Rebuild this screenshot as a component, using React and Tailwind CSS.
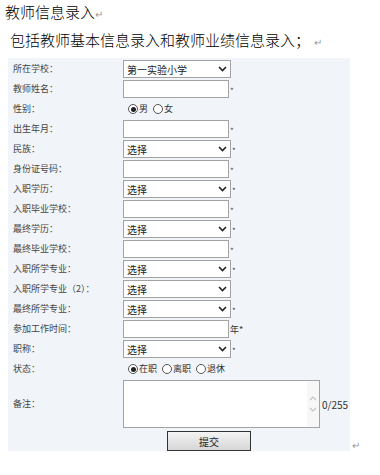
import React from 'react';

const FONT = { fontFamily: '"Noto Sans CJK SC", "Noto Sans", sans-serif' };

function Chevron() {
  return (
    <svg width="9" height="6" viewBox="0 0 9 6" className="shrink-0">
      <polyline points="1,1 4.5,4.5 8,1" fill="none" stroke="#222" strokeWidth="1.6" />
    </svg>
  );
}

function Star() {
  return <span className="ml-[1px] mt-[3px] text-[8px] leading-none text-[#444]">*</span>;
}

function Select({ value = '选择', star = true }) {
  return (
    <div className="flex items-center">
      <div className="flex h-[18px] w-[108px] items-center justify-between border border-[#a3a3a3] bg-white pl-[3px] pr-[3px] text-[10px] text-[#222]">
        <span>{value}</span>
        <Chevron />
      </div>
      {star && <Star />}
    </div>
  );
}

function Input({ suffix = '*' }) {
  return (
    <div className="flex items-center">
      <div className="h-[18px] w-[106px] border border-[#a3a3a3] bg-white" />
      {suffix === '*' ? <Star /> : <span className="ml-[1px] text-[9px] leading-none text-[#333]">{suffix}</span>}
    </div>
  );
}

function Radio({ checked, label }) {
  return (
    <span className="mr-[5px] flex items-center">
      <span className="flex h-[10px] w-[10px] items-center justify-center rounded-full border border-[#555] bg-white">
        {checked && <span className="h-[5px] w-[5px] rounded-full bg-[#222]" />}
      </span>
      <span className="ml-[1px] text-[9px] text-[#333]">{label}</span>
    </span>
  );
}

function Row({ label, children }) {
  return (
    <div className="flex h-5 items-center">
      <div className="w-[115px] pl-[5px] text-[9px] text-[#444]">{label}</div>
      {children}
    </div>
  );
}

export default function App() {
  return (
    <div className="h-[475px] w-[380px] bg-white" style={FONT}>
      <div className="h-[23px] pl-[5px] text-[15px] font-light leading-[23px] text-black">
        教师信息录入<span className="text-[10px] text-[#999]">↵</span>
      </div>
      <div className="mt-[5px] h-[23px] pl-[10px] text-[15px] font-light leading-[23px] text-black">
        包括教师基本信息录入和教师业绩信息录入；<span className="ml-[4px] text-[10px] text-[#999]">↵</span>
      </div>
      <div className="mt-[7px] flex items-end">
        <div className="ml-[8px] w-[342px] bg-[#f1f4f8] pt-[1px]">
          <Row label="所在学校："><Select value="第一实验小学" star={false} /></Row>
          <Row label="教师姓名："><Input /></Row>
          <Row label="性别：">
            <div className="ml-[5px] flex items-center">
              <Radio checked label="男" />
              <Radio label="女" />
            </div>
          </Row>
          <Row label="出生年月："><Input /></Row>
          <Row label="民族："><Select /></Row>
          <Row label="身份证号码："><Input /></Row>
          <Row label="入职学历："><Select /></Row>
          <Row label="入职毕业学校："><Input /></Row>
          <Row label="最终学历："><Select /></Row>
          <Row label="最终毕业学校："><Input /></Row>
          <Row label="入职所学专业："><Select /></Row>
          <Row label="入职所学专业（2）："><Select star={false} /></Row>
          <Row label="最终所学专业："><Select /></Row>
          <Row label="参加工作时间："><Input suffix="年*" /></Row>
          <Row label="职称："><Select /></Row>
          <Row label="状态：">
            <div className="ml-[5px] flex items-center">
              <Radio checked label="在职" />
              <Radio label="离职" />
              <Radio label="退休" />
            </div>
          </Row>
          <div className="flex h-[50px] items-center">
            <div className="w-[115px] pl-[5px] text-[9px] text-[#444]">备注：</div>
            <div className="flex h-[48px] w-[197px] justify-end border border-[#a3a3a3] bg-white">
              <div className="flex w-[12px] flex-col items-center justify-center gap-[6px] bg-[#f7f7f7]">
                <svg width="8" height="5" viewBox="0 0 8 5">
                  <polyline points="1,4 4,1 7,4" fill="none" stroke="#c4c4c4" strokeWidth="1.2" />
                </svg>
                <svg width="8" height="5" viewBox="0 0 8 5">
                  <polyline points="1,1 4,4 7,1" fill="none" stroke="#c4c4c4" strokeWidth="1.2" />
                </svg>
              </div>
            </div>
            <span className="ml-[2px] text-[10px] text-[#333]">0/255</span>
          </div>
          <div className="flex h-[22px] items-start pt-[2px]">
            <button className="ml-[159px] flex h-[20px] w-[84px] items-center justify-center border border-[#333] bg-gradient-to-b from-[#f4f4f4] to-[#d6d6d6] text-[10px] text-[#222]">
              提交
            </button>
          </div>
        </div>
        <span className="mb-[1px] ml-[2px] text-[10px] leading-none text-[#999]">↵</span>
      </div>
    </div>
  );
}
